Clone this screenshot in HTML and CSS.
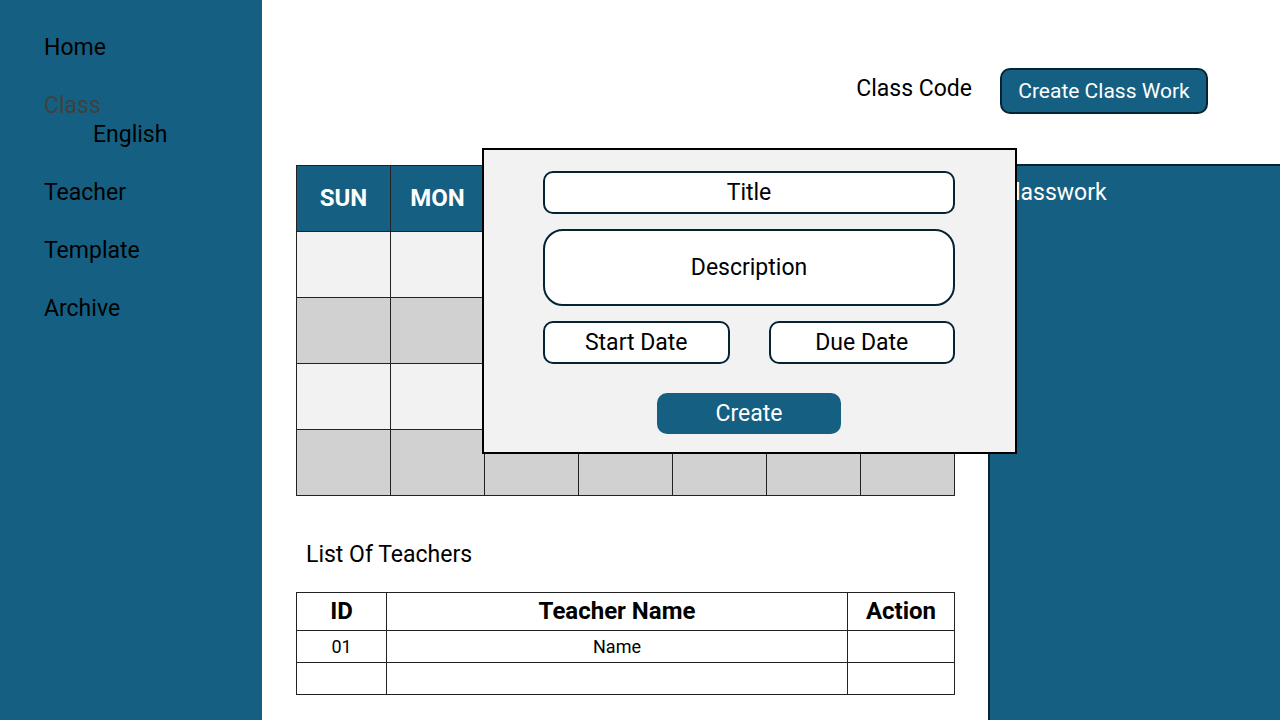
FILE: index.html
```html
<!DOCTYPE html>
<html lang="en">
<head>
<meta charset="utf-8">
<title>Class</title>
<link rel="stylesheet" href="styles.css">
</head>
<body class="page">
<nav class="sidebar">
  <ul class="menu">
    <li><a class="menu-link" href="#">Home</a></li>
    <li>
      <a class="menu-link current" href="#">Class</a>
      <ul class="submenu"><li><a class="menu-link" href="#">English</a></li></ul>
    </li>
    <li><a class="menu-link" href="#">Teacher</a></li>
    <li><a class="menu-link" href="#">Template</a></li>
    <li><a class="menu-link" href="#">Archive</a></li>
  </ul>
</nav>
<main class="main">
  <header class="topbar">
    <span class="class-code">Class Code</span>
    <button class="button open-button" type="button">Create Class Work</button>
  </header>
  <div class="content">
    <section class="overview">
      <table class="grid calendar">
        <thead><tr><th>SUN</th><th>MON</th><th>TUE</th><th>WED</th><th>THU</th><th>FRI</th><th>SAT</th></tr></thead>
        <tbody>
          <tr><td></td><td></td><td></td><td></td><td></td><td></td><td></td></tr>
          <tr><td></td><td></td><td></td><td></td><td></td><td></td><td></td></tr>
          <tr><td></td><td></td><td></td><td></td><td></td><td></td><td></td></tr>
          <tr><td></td><td></td><td></td><td></td><td></td><td></td><td></td></tr>
        </tbody>
      </table>
      <h2 class="section-title">List Of Teachers</h2>
      <table class="grid teachers">
        <colgroup><col class="col-id"><col><col class="col-action"></colgroup>
        <thead><tr><th>ID</th><th>Teacher Name</th><th>Action</th></tr></thead>
        <tbody>
          <tr><td>01</td><td>Name</td><td></td></tr>
          <tr><td></td><td></td><td></td></tr>
        </tbody>
      </table>
    </section>
    <aside class="classwork"><h2 class="classwork-title">Classwork</h2></aside>
  </div>
</main>
<form class="dialog" role="dialog" aria-label="Create Class Work">
  <input class="field" type="text" aria-label="Title" placeholder="Title">
  <textarea class="field description" aria-label="Description" placeholder="Description"></textarea>
  <div class="dates">
    <input class="field" type="text" aria-label="Start Date" placeholder="Start Date">
    <input class="field" type="text" aria-label="Due Date" placeholder="Due Date">
  </div>
  <button class="button submit" type="button">Create</button>
</form>
</body>
</html>
```
FILE: styles.css
```css
* { box-sizing: border-box; }

.page {
  --blue: #156082;
  --navy: #042433;
  display: flex;
  min-height: 100vh;
  margin: 0;
  background: #fff;
  color: #000;
  font: 23px/29px Roboto, "Liberation Sans", sans-serif;
}

.sidebar {
  flex: none;
  width: 262px;
  padding: 33px 44px;
  background: var(--blue);
}
.menu, .submenu { margin: 0; padding: 0; list-style: none; }
.menu { display: flex; flex-direction: column; gap: 29px; }
.submenu { padding-left: 49px; }
.menu-link { display: block; color: #000; text-decoration: none; }
.menu-link.current { color: #404040; }

.main { display: flex; flex: 1; flex-direction: column; min-width: 0; }
.topbar {
  display: flex;
  justify-content: flex-end;
  gap: 28px;
  padding: 68px 72px 50px 34px;
}
.class-code { padding-top: 6px; }

.button {
  border: 2px solid var(--navy);
  border-radius: 10px;
  background: var(--blue);
  color: #fff;
  font: inherit;
}
.open-button { width: 208px; height: 46px; padding: 0; font-size: 21px; }

.content { display: flex; flex: 1; }
.overview { flex: 1; min-width: 0; padding: 1px 33px 24px 34px; }
.grid { width: 100%; border-collapse: collapse; table-layout: fixed; }
.grid th, .grid td { padding: 0; border: 1px solid #222; text-align: center; }
.grid th { font-size: 24px; }
.calendar tr { height: 66px; }
.calendar th { background: var(--blue); color: #fff; }
.calendar td { background: #f2f2f2; }
.calendar tr:nth-child(even) td { background: #d1d1d1; }
.section-title { margin: 44px 10px 23px; font-size: 23px; font-weight: 400; }
.teachers thead tr { height: 38px; }
.teachers tbody tr { height: 32px; }
.teachers td { font-size: 18px; }
.col-id { width: 90px; }
.col-action { width: 107px; }

.classwork {
  flex: none;
  width: 292px;
  padding: 12px 10px;
  border: solid var(--navy);
  border-width: 2px 0 0 2px;
  background: var(--blue);
  color: #fff;
}
.classwork-title { margin: 0; font-size: 23px; font-weight: 400; }

.dialog {
  position: absolute;
  top: 148px;
  left: 482px;
  display: flex;
  flex-direction: column;
  gap: 15px;
  width: 535px;
  padding: 21px 60px 18px 59px;
  border: 2px solid #000;
  background: #f2f2f2;
}
.field {
  width: 100%;
  min-width: 0;
  height: 43px;
  margin: 0;
  padding: 0 10px;
  border: 2px solid var(--navy);
  border-radius: 10px;
  background: #fff;
  color: #000;
  font: inherit;
  text-align: center;
}
.field::placeholder { color: #000; opacity: 1; }
.description { height: 77px; padding: 22px 10px; border-radius: 20px; resize: none; overflow: hidden; }
.dates { display: flex; gap: 39px; }
.submit { align-self: center; width: 184px; height: 41px; margin-top: 14px; padding: 0; border: 0; }
```
